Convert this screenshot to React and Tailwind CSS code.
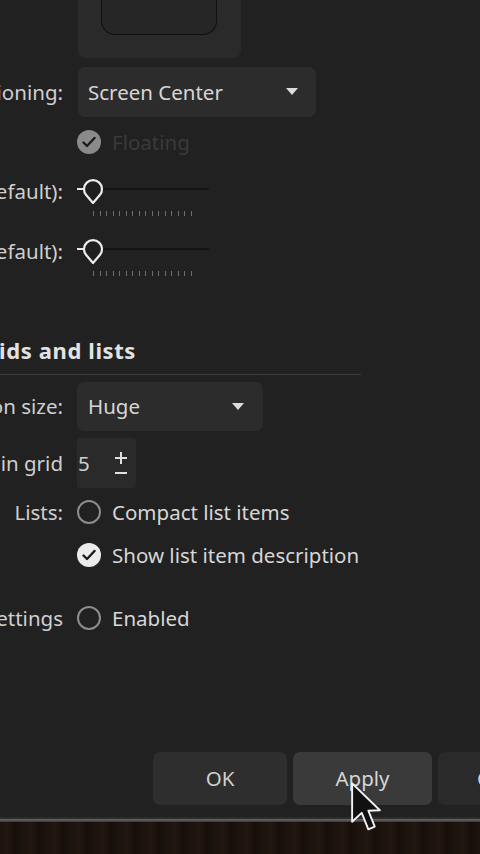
import React from 'react';

const font = { fontFamily: '"Noto Sans", "Open Sans", sans-serif' };

const Label = ({ children, className = '' }) => (
  <div className={`w-[63px] shrink-0 flex justify-end whitespace-nowrap text-[20.5px] text-[#cfcfcf] ${className}`}>
    <span>{children}</span>
  </div>
);

const Caret = () => (
  <svg width="12" height="8" viewBox="0 0 12 8">
    <path d="M0 0 H12 L6 7 Z" fill="#dcdcdc" />
  </svg>
);

const Radio = ({ checked, disabled }) =>
  checked ? (
    <div
      className={`w-6 h-6 rounded-full flex items-center justify-center ${
        disabled ? 'bg-[#8a8a8a]' : 'bg-[#ececec]'
      }`}
    >
      <svg width="14" height="12" viewBox="0 0 14 12">
        <path d="M1.5 6.5 L5 10 L12.5 2" fill="none" stroke="#1c1c1c" strokeWidth="2.4" strokeLinecap="round" strokeLinejoin="round" />
      </svg>
    </div>
  ) : (
    <div className="w-6 h-6 rounded-full border-2 border-[#8c8c8c]" />
  );

const Slider = () => (
  <div className="flex flex-col">
    <div className="relative h-7 w-[132px]">
      <div className="absolute left-[22px] right-0 top-[11px] h-[2px] bg-[#141414]" />
      <div className="absolute left-0 w-[8px] top-[11px] h-[2px] bg-[#e6e6e6]" />
      <svg className="absolute left-[3px] top-[1px]" width="28" height="28" viewBox="0 0 28 28">
        <path
          d="M13 25 L6.2 17 A9 9 0 1 1 19.8 17 Z"
          fill="#1f1f1f"
          stroke="#ececec"
          strokeWidth="2.2"
          strokeLinejoin="round"
        />
      </svg>
    </div>
    <div className="flex gap-[5.5px] pl-[16px] mt-[6px] h-[5px]">
      {Array.from({ length: 16 }).map((_, i) => (
        <div key={i} className="w-px h-full bg-[#6e6e6e]" />
      ))}
    </div>
  </div>
);

const Cursor = () => (
  <svg className="absolute left-[350px] top-[781px]" width="32" height="56" viewBox="0 0 15 26">
    <path
      d="M1 1 L1 19 L5.5 14.8 L8.6 22.5 L11.6 21.3 L8.6 13.8 L14 13.6 Z"
      fill="#111"
      stroke="#f2f2f2"
      strokeWidth="0.9"
      strokeLinejoin="round"
    />
  </svg>
);

export default function App() {
  return (
    <div className="relative w-[480px] h-[854px] overflow-hidden bg-[#212121] flex flex-col" style={font}>
      <div className="flex-1 flex flex-col">
        {/* preview */}
        <div className="ml-[78px] w-[163px] h-[58px] bg-[#2a2a2a] rounded-b-[8px] pl-[23px]">
          <div className="w-[116px] h-[35px] bg-[#262626] border-[1.5px] border-t-0 border-[#0f0f0f] rounded-b-[14px]" />
        </div>

        {/* positioning */}
        <div className="flex items-center gap-[15px] mt-[9px] h-[50px]">
          <Label>Positioning:</Label>
          <div className="w-[238px] h-full bg-[#2c2c2c] rounded-[7px] flex items-center justify-between pl-[10px] pr-[18px]">
            <span className="text-[20.5px] text-[#d6d6d6]">Screen Center</span>
            <Caret />
          </div>
        </div>

        {/* floating */}
        <div className="flex items-center gap-[11px] ml-[77px] mt-[12px] h-[26px]">
          <Radio checked disabled />
          <span className="text-[20.5px] text-[#3a3a3a]">Floating</span>
        </div>

        {/* sliders */}
        <div className="flex items-start gap-[14px] mt-[22px]">
          <Label className="h-7 items-center">Width (0 = default):</Label>
          <Slider />
        </div>
        <div className="flex items-start gap-[14px] mt-[21px]">
          <Label className="h-7 items-center">Height (0 = default):</Label>
          <Slider />
        </div>

        {/* section header */}
        <div className="mt-[60px] h-7 flex items-center justify-end w-[136px] whitespace-nowrap">
          <span className="text-[22px] font-bold tracking-[0.6px] text-[#e2e2e2]">Grids and lists</span>
        </div>
        <div className="mt-[10px] w-[361px] h-px bg-[#3d3d3d]" />

        {/* icon size */}
        <div className="flex items-center gap-[14px] mt-[7px] h-[49px]">
          <Label>Icon size:</Label>
          <div className="w-[186px] h-full bg-[#2c2c2c] rounded-[7px] flex items-center justify-between pl-[11px] pr-[19px]">
            <span className="text-[20.5px] text-[#d6d6d6]">Huge</span>
            <Caret />
          </div>
        </div>

        {/* spin box */}
        <div className="flex items-center gap-[14px] mt-[7px] h-[50px]">
          <Label>Items in grid</Label>
          <div className="w-[59px] h-full bg-[#2a2a2a] rounded-[3px] flex items-center justify-between pl-px pr-[9px]">
            <span className="text-[20.5px] text-[#d0d0d0]">5</span>
            <div className="flex flex-col items-center gap-[8px]">
              <svg width="12" height="12" viewBox="0 0 12 12">
                <path d="M6 0 V12 M0 6 H12" stroke="#e0e0e0" strokeWidth="2" />
              </svg>
              <svg width="12" height="2" viewBox="0 0 12 2">
                <path d="M0 1 H12" stroke="#e0e0e0" strokeWidth="2" />
              </svg>
            </div>
          </div>
        </div>

        {/* lists */}
        <div className="flex items-center gap-[14px] mt-[11px] h-[26px]">
          <Label>Lists:</Label>
          <div className="flex items-center gap-[11px]">
            <Radio />
            <span className="text-[20.5px] text-[#d6d6d6]">Compact list items</span>
          </div>
        </div>
        <div className="flex items-center gap-[11px] ml-[77px] mt-[17px] h-[26px]">
          <Radio checked />
          <span className="text-[20.5px] text-[#d6d6d6]">Show list item description</span>
        </div>

        {/* settings */}
        <div className="flex items-center gap-[14px] mt-[37px] h-[26px]">
          <Label>Search settings</Label>
          <div className="flex items-center gap-[11px]">
            <Radio />
            <span className="text-[20.5px] text-[#d6d6d6]">Enabled</span>
          </div>
        </div>
      </div>

      {/* footer buttons */}
      <div className="flex gap-[6px] pl-[153px] h-[53px] mb-[12px]">
        <div className="w-[134px] shrink-0 bg-[#2e2e2e] rounded-[7px] flex items-center justify-center text-[20.5px] text-[#d0d0d0]">OK</div>
        <div className="w-[139px] shrink-0 bg-[#3a3a3a] rounded-[7px] flex items-center justify-center text-[20.5px] text-[#d6d6d6]">Apply</div>
        <div className="w-[142px] shrink-0 bg-[#2a2a2a] rounded-[7px] flex items-center justify-center text-[20.5px] text-[#d0d0d0]">Cancel</div>
      </div>

      {/* window edge and desktop */}
      <div className="h-[2px] bg-[#2c2c2c]" />
      <div className="h-[3px] bg-gradient-to-b from-[#6a6a6a] to-[#3a3a3a]" />
      <div className="h-[32px] bg-[#1c130e] bg-[repeating-linear-gradient(90deg,#1c130e_0px,#22170f_7px,#160f0b_15px,#1e140e_24px)]" />

      <Cursor />
    </div>
  );
}
